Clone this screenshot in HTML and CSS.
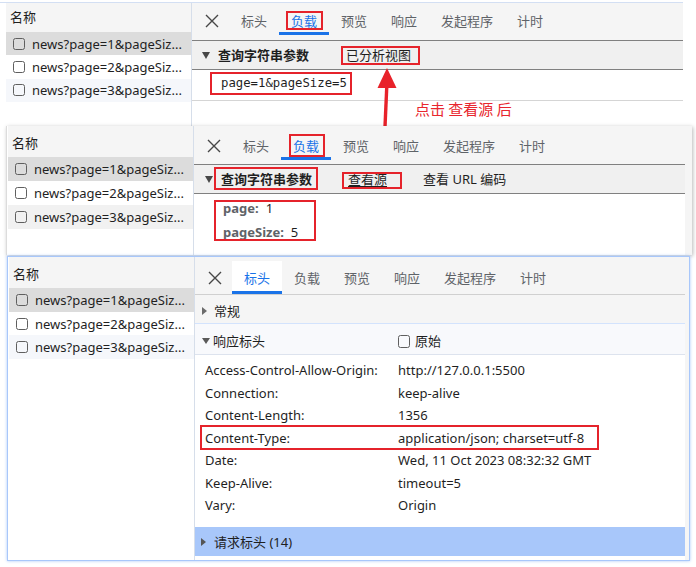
FILE: index.html
```html
<!DOCTYPE html>
<html lang="zh-CN">
<head>
<meta charset="utf-8">
<title>DevTools 负载 / 标头</title>
<link rel="stylesheet" href="styles.css">
</head>
<body>
<div class="page">
  <div class="strip"></div>

  <section class="panel p1">
    <aside class="list">
      <div class="list-head">名称</div>
      <div class="req sel"><i class="cb"></i><span>news?page=1&amp;pageSiz...</span></div>
      <div class="req"><i class="cb"></i><span>news?page=2&amp;pageSiz...</span></div>
      <div class="req alt"><i class="cb"></i><span>news?page=3&amp;pageSiz...</span></div>
    </aside>
    <div class="detail">
      <nav class="tabs">
        <span class="close"><svg viewBox="0 0 14 14" width="14" height="14"><path d="M1 1L13 13M13 1L1 13" stroke="#474747" stroke-width="1.4" fill="none"/></svg></span>
        <span class="tab">标头</span>
        <span class="tab active"><span class="mark m-p1tab">负载</span></span>
        <span class="tab">预览</span>
        <span class="tab">响应</span>
        <span class="tab">发起程序</span>
        <span class="tab">计时</span>
      </nav>
      <div class="sec-head">
        <i class="tri-down"></i><span class="sec-title">查询字符串参数</span><span class="sec-link mark m-parsed">已分析视图</span>
      </div>
      <div class="body">
        <div class="src-row"><span class="code mark m-code">page=1&amp;pageSize=5</span></div>
      </div>
    </div>
  </section>

  <section class="panel p2">
    <aside class="list">
      <div class="list-head">名称</div>
      <div class="req sel"><i class="cb"></i><span>news?page=1&amp;pageSiz...</span></div>
      <div class="req"><i class="cb"></i><span>news?page=2&amp;pageSiz...</span></div>
      <div class="req alt"><i class="cb"></i><span>news?page=3&amp;pageSiz...</span></div>
    </aside>
    <div class="detail">
      <nav class="tabs">
        <span class="close"><svg viewBox="0 0 14 14" width="14" height="14"><path d="M1 1L13 13M13 1L1 13" stroke="#474747" stroke-width="1.4" fill="none"/></svg></span>
        <span class="tab">标头</span>
        <span class="tab active"><span class="mark m-p2tab">负载</span></span>
        <span class="tab">预览</span>
        <span class="tab">响应</span>
        <span class="tab">发起程序</span>
        <span class="tab">计时</span>
      </nav>
      <div class="sec-head">
        <i class="tri-down"></i><span class="sec-title mark m-title">查询字符串参数</span><span class="sec-link focused mark m-source">查看源</span><span class="sec-link">查看 URL 编码</span>
      </div>
      <div class="body">
        <div class="kv">
          <div class="kv-box mark m-kv">
            <div class="kv-row"><b>page:</b><span>1</span></div>
            <div class="kv-row"><b>pageSize:</b><span>5</span></div>
          </div>
        </div>
      </div>
    </div>
  </section>

  <section class="panel p3">
    <aside class="list">
      <div class="list-head">名称</div>
      <div class="req sel"><i class="cb"></i><span>news?page=1&amp;pageSiz...</span></div>
      <div class="req"><i class="cb"></i><span>news?page=2&amp;pageSiz...</span></div>
      <div class="req alt"><i class="cb"></i><span>news?page=3&amp;pageSiz...</span></div>
    </aside>
    <div class="detail">
      <nav class="tabs">
        <span class="close"><svg viewBox="0 0 14 14" width="14" height="14"><path d="M1 1L13 13M13 1L1 13" stroke="#474747" stroke-width="1.4" fill="none"/></svg></span>
        <span class="tab active">标头</span>
        <span class="tab">负载</span>
        <span class="tab">预览</span>
        <span class="tab">响应</span>
        <span class="tab">发起程序</span>
        <span class="tab">计时</span>
      </nav>
      <div class="gen"><i class="tri-right"></i><span>常规</span></div>
      <div class="resp">
        <div class="resp-title"><i class="tri-down small"></i><span>响应标头</span></div>
        <label class="raw"><i class="cb"></i><span>原始</span></label>
      </div>
      <div class="body">
        <div class="hdrs">
          <div class="hrow"><span>Access-Control-Allow-Origin:</span><span>http://127.0.0.1:5500</span></div>
          <div class="hrow"><span>Connection:</span><span>keep-alive</span></div>
          <div class="hrow"><span>Content-Length:</span><span>1356</span></div>
          <div class="hrow mark m-ctype"><span>Content-Type:</span><span>application/json; charset=utf-8</span></div>
          <div class="hrow"><span>Date:</span><span>Wed, 11 Oct 2023 08:32:32 GMT</span></div>
          <div class="hrow"><span>Keep-Alive:</span><span>timeout=5</span></div>
          <div class="hrow"><span>Vary:</span><span>Origin</span></div>
        </div>
        <div class="req-hdr"><i class="tri-right"></i><span>请求标头 (14)</span></div>
      </div>
    </div>
  </section>

  <div class="note">点击 查看源 后</div>
  <svg class="arrow" viewBox="0 0 30 120" width="30" height="120">
    <line x1="16.8" y1="26" x2="13" y2="112" stroke="#e8222a" stroke-width="3.4"/>
    <polygon points="17,8 7.5,28 26.5,28" fill="#e8222a"/>
  </svg>
</div>
</body>
</html>
```

FILE: styles.css
```css
* { box-sizing: border-box; margin: 0; padding: 0; }

body {
  margin: 0;
  background: #fff;
  font-family: "Segoe UI", "Noto Sans", "Noto Sans CJK SC", sans-serif;
  font-size: 13px;
  color: #1f1f1f;
}

.page {
  position: relative;
  width: 696px;
  height: 567px;
  overflow: hidden;
}

.strip {
  height: 3px;
  width: 683px;
  border-bottom: 1px solid #d3dff3;
}

/* ---------- panels ---------- */
.panel {
  display: flex;
  background: #f5f5f5;
}

.p1 {
  width: 683px;
  height: 124px;
  background: #fff;
  --tp: 7px;
}

.p2 {
  width: 686px;
  height: 129px;
  margin-left: 6px;
  margin-top: -1px;
  border-left: 1px solid #dcdcdc;
  box-shadow: 1px 1px 4px rgba(0, 0, 0, .28);
  position: relative;
  z-index: 1;
  --tp: 9px;
}

.p3 {
  width: 683px;
  height: 305px;
  margin-left: 7px;
  margin-top: 1px;
  border: 1px solid #a8c7fa;
  box-shadow: 0 0 3px #a8c7fa;
  position: relative;
  z-index: 2;
  --tm: 4px;
  --tp: 6px;
  --tb: 2px;
}

/* ---------- request list ---------- */
.list {
  flex: none;
  display: flex;
  flex-direction: column;
  background: #fff;
  border-right: 1px solid #d6deea;
}

.p1 .list { width: 192px; padding-left: 6px; }
.p2 .list { width: 187px; padding-left: 1px; }
.p3 .list { width: 187px; padding-left: 1px; }

.list-head {
  background: #f5f5f5;
  padding-left: 4px;
  color: #1f1f1f;
}

.p1 .list-head { height: 29px; line-height: 29px; }
.p2 .list-head { height: 31px; padding-top: 3px; line-height: 28px; }
.p3 .list-head { height: 31px; padding-top: 4px; line-height: 27px; }

.req {
  display: flex;
  align-items: center;
  gap: 7px;
  padding-left: 7px;
  white-space: nowrap;
  overflow: hidden;
}

.p1 .req { height: 23.3px; }
.p2 .req { height: 24px; }
.p3 .req { height: 23.7px; }

.req.sel { background: #dcdcdc; }
.req.alt { background: #f5f7fb; }
.p2 .req.alt { background: #f1f1f1; }

.cb {
  flex: none;
  width: 12px;
  height: 12px;
  border: 1.5px solid #5f5f5f;
  border-radius: 2.5px;
}

/* ---------- detail ---------- */
.detail {
  flex: 1;
  min-width: 0;
  display: flex;
  flex-direction: column;
}

.p2 .detail { margin-right: 7px; }
.p3 .detail { margin-right: 4px; }

.tabs {
  flex: none;
  display: flex;
  align-items: flex-start;
  background: #f5f5f5;
}

.p1 .tabs { height: 37px; }
.p2 .tabs { height: 38px; }
.p3 .tabs { height: 38px; border-bottom: 1px solid #d0d0d0; }

.close {
  flex: none;
  display: block;
  width: 14px;
  height: 14px;
  margin: calc(var(--tm, 0px) + var(--tp) + 4px) 10px 0 13px;
}

.close svg { display: block; }

.tab {
  margin-top: var(--tm, 0px);
  padding: var(--tp) 12px var(--tb, 0px);
  line-height: 22px;
  border-bottom: 3px solid transparent;
  color: #5f6368;
  white-space: nowrap;
}

.tab.active {
  color: #1a73e8;
  border-bottom-color: #1a73e8;
}

.p3 .tab.active { background: #fff; }

.sec-head {
  flex: none;
  display: flex;
  align-items: center;
  height: 30px;
  border-top: 1px solid #808080;
  border-bottom: 1px solid #808080;
  background: #f0f0f0;
}

.tri-down {
  flex: none;
  width: 0;
  height: 0;
  border-left: 4.5px solid transparent;
  border-right: 4.5px solid transparent;
  border-top: 7px solid #474747;
  margin: 0 8px 0 10px;
}

.p2 .tri-down { margin-left: 11px; }

.tri-right {
  flex: none;
  width: 0;
  height: 0;
  border-top: 4px solid transparent;
  border-bottom: 4px solid transparent;
  border-left: 5px solid #6b6b6b;
  margin: 0 7px;
}

.sec-title {
  font-weight: bold;
  line-height: 20px;
  color: #1f1f1f;
}

.sec-link {
  margin-left: 36px;
  line-height: 20px;
  color: #1f1f1f;
}

.sec-link.focused {
  text-decoration: underline;
  text-underline-offset: 2px;
}

.p1 .sec-link { margin-left: 37px; }

.body {
  flex: 1;
  background: #fff;
}

.src-row {
  height: 31px;
  padding: 3px 0 0 29px;
  border-bottom: 1px solid #d5d5d5;
}

.code {
  display: inline-block;
  font-family: "DejaVu Sans Mono", "Liberation Mono", monospace;
  font-size: 12.3px;
  line-height: 20px;
  color: #1f1f1f;
}

.kv { padding: 2px 0 0 29px; }

.kv-box {
  display: block;
  width: 93px;
}

.kv-row {
  display: flex;
  line-height: 24px;
  white-space: nowrap;
}

.kv-row b {
  font-weight: bold;
  color: #5f6368;
  margin-right: 7px;
}

/* ---------- headers view ---------- */
.gen {
  flex: none;
  display: flex;
  align-items: center;
  height: 29px;
  padding-top: 4px;
  background: #f5f5f5;
  border-bottom: 1px solid #d3e3fd;
  line-height: 22px;
}

.resp {
  flex: none;
  display: flex;
  align-items: center;
  height: 31px;
  padding-top: 4px;
  background: #f8f9fc;
  border-bottom: 1px solid #dde3ee;
  line-height: 22px;
}

.resp-title {
  display: flex;
  align-items: center;
  width: 203px;
}

.tri-down.small {
  border-top-width: 6px;
  border-top-color: #5a5a5a;
  margin: 0 3px 0 7px;
}

.raw {
  display: flex;
  align-items: center;
  gap: 5px;
}

.raw .cb { height: 13px; }

.hdrs { padding: 4px 0 0 10px; }

.hrow {
  display: grid;
  grid-template-columns: 193px 1fr;
  height: 22.5px;
  line-height: 22.5px;
  white-space: nowrap;
}

.req-hdr {
  display: flex;
  align-items: center;
  height: 29px;
  margin-top: 10.5px;
  padding-left: 6px;
  background: #a8c7fa;
}

.req-hdr .tri-right {
  margin: 0 8px 0 0;
  border-left-color: #555;
}

/* ---------- annotations ---------- */
.mark { position: relative; }

.mark::after {
  content: "";
  position: absolute;
  border: 2px solid #e5232b;
  pointer-events: none;
}

.m-p1tab::after  { inset: -1px -6px 0 -5px; }
.m-p2tab::after  { inset: -3px -6px -2px -4px; }
.m-parsed::after { inset: 1px -9px 0 -5px; }
.m-code::after   { inset: -1px -5px -2px -11px; }
.m-title::after  { inset: -2px -6px -1px -7px; }
.m-source::after { inset: 2.5px -15px 0 -6px; }
.m-kv::after     { inset: 4px 0 3px -9px; }
.m-ctype::after  { top: -1.75px; bottom: -0.75px; left: -5px; width: 395px; }

.note {
  position: absolute;
  left: 415px;
  top: 99px;
  font-family: "Noto Sans CJK SC", sans-serif;
  font-size: 15px;
  line-height: 20px;
  color: #e8262e;
  white-space: nowrap;
}

.arrow {
  position: absolute;
  left: 370px;
  top: 60px;
}
```
